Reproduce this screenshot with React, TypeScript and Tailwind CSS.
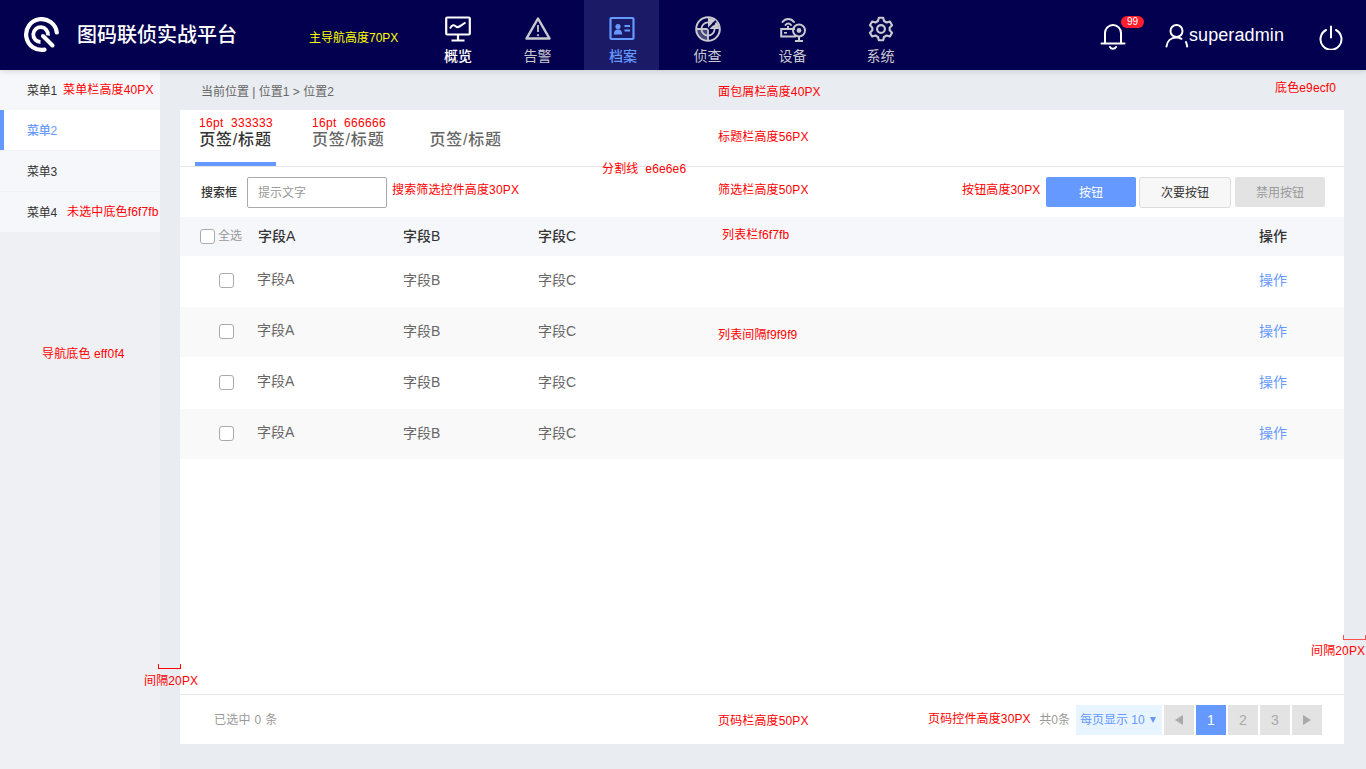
import type { ReactNode } from "react";

const FONT = "font-['Liberation_Sans','Noto_Sans_CJK_SC',sans-serif]";

function LogoMark() {
  return (
    <svg width="36" height="36" viewBox="0 0 36 36" fill="none" stroke="#fff" strokeLinecap="round">
      <path d="M20.5 32.6 A15.4 15.4 0 1 1 32.8 15.5" strokeWidth="4.2" />
      <path d="M16.5 25 A7.4 7.4 0 1 1 24 18.5" strokeWidth="3.8" strokeLinecap="butt" />
      <path d="M19 19 L28.5 28.5" strokeWidth="4" />
    </svg>
  );
}

function OverviewIcon() {
  return (
    <svg width="26" height="26" viewBox="0 0 26 26" fill="none" stroke="currentColor" strokeWidth="2.2">
      <rect x="1.2" y="1.5" width="23.6" height="17" rx="1" />
      <path d="M5 12.5 C7 8.5 9 8.5 11 10.5 C13 12.5 15 10 20.5 6.5" strokeWidth="2" />
      <path d="M13 18.5 V24 M6.5 24.5 H19.5" />
    </svg>
  );
}

function AlertIcon() {
  return (
    <svg width="26" height="26" viewBox="0 0 26 26" fill="none" stroke="currentColor" strokeWidth="2.5" strokeLinejoin="round">
      <path d="M13 2.5 L24.5 22.5 H1.5 Z" />
      <path d="M13 9 V16" strokeWidth="1.8" />
      <circle cx="13" cy="19.2" r="0.7" strokeWidth="1" fill="currentColor" />
    </svg>
  );
}

function ArchiveIcon() {
  return (
    <svg width="26" height="26" viewBox="0 0 26 26" fill="none" stroke="currentColor" strokeWidth="2.2">
      <rect x="1.5" y="2" width="23" height="21" rx="1" />
      <circle cx="9" cy="10.5" r="2.6" fill="currentColor" stroke="none" />
      <path d="M4.8 18.5 C5 14.5 6.8 13.5 9 13.5 C11.2 13.5 13 14.5 13.2 18.5 Z" fill="currentColor" stroke="none" />
      <path d="M15.5 10 H21 M15.5 14.5 H21" strokeWidth="1.8" />
    </svg>
  );
}

function RadarIcon() {
  return (
    <svg width="26" height="26" viewBox="0 0 26 26" fill="none" stroke="currentColor" strokeWidth="2">
      <circle cx="13" cy="13" r="11.8" />
      <path d="M13 2 A11 11 0 0 1 24 13 L13 13 Z" fill="currentColor" stroke="none" />
      <path d="M1.5 13 A11.5 11.5 0 0 0 13 24.5 V13 Z" fill="currentColor" fillOpacity="0.35" stroke="none" />
      <circle cx="13" cy="13" r="6.6" strokeWidth="1.8" />
      <path d="M1.5 13 H13 V25" strokeWidth="1.8" />
      <path d="M13 13 L21 5" strokeWidth="1.8" stroke="#03004f" />
      <circle cx="18.5" cy="8" r="1.4" fill="#03004f" stroke="none" />
    </svg>
  );
}

function DeviceIcon() {
  return (
    <svg width="26" height="26" viewBox="0 0 26 26" fill="none" stroke="currentColor" strokeWidth="2">
      <path d="M2.5 6 C5.5 2 11 2 14 6" strokeLinecap="round" />
      <path d="M5.5 9 C7 7 9.5 7 11 9" strokeLinecap="round" />
      <path d="M8 10 V13" />
      <path d="M15 13 H1.2 V20.5 H16" />
      <path d="M4 16.8 H7" strokeWidth="1.6" />
      <circle cx="19" cy="14.5" r="6" />
      <circle cx="19" cy="14.5" r="2.4" fill="currentColor" stroke="none" />
      <path d="M19 20.5 V25 M15 25 H23" />
    </svg>
  );
}

function GearIcon() {
  return (
    <svg width="26" height="26" viewBox="0 0 24 24" fill="none" stroke="currentColor" strokeWidth="2" strokeLinejoin="round">
      <path d="M10 1.6 H14 L14.8 4.6 L17.2 6 L20.2 5.1 L22.2 8.6 L20 10.8 V13.2 L22.2 15.4 L20.2 18.9 L17.2 18 L14.8 19.4 L14 22.4 H10 L9.2 19.4 L6.8 18 L3.8 18.9 L1.8 15.4 L4 13.2 V10.8 L1.8 8.6 L3.8 5.1 L6.8 6 L9.2 4.6 Z" />
      <circle cx="12" cy="12" r="3.6" />
    </svg>
  );
}

const navItems: { label: string; icon: ReactNode; className: string; labelClass?: string }[] = [
  { label: "概览", icon: <OverviewIcon />, className: "ml-[0px] text-white font-medium", labelClass: "pl-[1px]" },
  { label: "告警", icon: <AlertIcon />, className: "ml-[5px] text-[#c9c9cf]" },
  { label: "档案", icon: <ArchiveIcon />, className: "ml-[9px] text-[#6699ff] font-medium bg-[#1a1a66]", labelClass: "pl-[3px]" },
  { label: "侦查", icon: <RadarIcon />, className: "ml-[11px] text-[#c9c9cf]" },
  { label: "设备", icon: <DeviceIcon />, className: "ml-[10px] text-[#c9c9cf]" },
  { label: "系统", icon: <GearIcon />, className: "ml-[13px] text-[#c9c9cf]" },
];

const menuItems = [
  { label: "菜单1", className: "h-10 bg-[#f6f7fb] text-[#333333] border-l-4 border-[#f6f7fb]" },
  { label: "菜单2", className: "h-10 bg-white text-[#6699ff] font-medium border-l-4 border-[#6699ff]" },
  { label: "菜单3", className: "h-10 mt-px bg-[#f6f7fb] text-[#333333] border-l-4 border-[#f6f7fb]" },
  { label: "菜单4", className: "h-10 mt-px bg-[#f6f7fb] text-[#333333] border-l-4 border-[#f6f7fb]" },
];

const rows = [
  "h-[50px] bg-white",
  "h-[50px] mt-px bg-[#f9f9f9]",
  "h-[50px] mt-px bg-white",
  "h-[50px] mt-px bg-[#f9f9f9]",
];

// red spec notes sit on top of the design, so they are placed by coordinates
const notes = [
  { text: "菜单栏高度40PX", className: "left-[63px] top-[82px]" },
  { text: "未选中底色f6f7fb", className: "left-[67px] top-[204px] tracking-[0.3px]" },
  { text: "导航底色 eff0f4", className: "left-[42px] top-[346px]" },
  { text: "间隔20PX", className: "left-[144px] top-[673px]" },
  { text: "16pt  333333", className: "left-[199px] top-[115px] whitespace-pre tracking-[0.33px]" },
  { text: "16pt  666666", className: "left-[312px] top-[115px] whitespace-pre tracking-[0.33px]" },
  { text: "搜索筛选控件高度30PX", className: "left-[392px] top-[182px]" },
  { text: "分割线  e6e6e6", className: "left-[602px] top-[161px] whitespace-pre" },
  { text: "面包屑栏高度40PX", className: "left-[718px] top-[84px]" },
  { text: "标题栏高度56PX", className: "left-[718px] top-[129px]" },
  { text: "筛选栏高度50PX", className: "left-[718px] top-[182px]" },
  { text: "列表栏f6f7fb", className: "left-[722px] top-[227px]" },
  { text: "列表间隔f9f9f9", className: "left-[718px] top-[327px]" },
  { text: "页码栏高度50PX", className: "left-[718px] top-[713px]" },
  { text: "按钮高度30PX", className: "left-[962px] top-[182px]" },
  { text: "页码控件高度30PX", className: "left-[928px] top-[711px]" },
  { text: "底色e9ecf0", className: "left-[1275px] top-[80px]" },
  { text: "间隔20PX", className: "left-[1311px] top-[643px]" },
];

function Checkbox() {
  return <span className="block h-[15px] w-[15px] rounded-[3px] border border-[#aaaaaa] bg-white" />;
}

function PageButton({ children, active }: { children: ReactNode; active?: boolean }) {
  return (
    <button
      type="button"
      className={
        active
          ? "flex h-[30px] w-[30px] items-center justify-center bg-[#6699ff] text-sm text-white"
          : "flex h-[30px] w-[30px] items-center justify-center bg-[#e3e3e3] text-sm text-[#aaaaaa]"
      }
    >
      {children}
    </button>
  );
}

export default function App() {
  return (
    <div className={`${FONT} relative flex h-[769px] w-[1366px] flex-col overflow-hidden bg-[#e9ecf0]`}>
      <header className="relative z-10 flex h-[70px] shrink-0 bg-[#03004f] shadow-[0_1px_6px_rgba(0,0,0,0.15)]">
        <div className="flex w-[420px] shrink-0 items-center pl-6">
          <LogoMark />
          <span className="ml-[17px] text-xl font-medium text-white">图码联侦实战平台</span>
        </div>
        <nav className="flex">
          {navItems.map((item) => (
            <a key={item.label} className={`flex h-[70px] w-[75px] flex-col items-center pt-4 ${item.className}`}>
              {item.icon}
              <span className={`mt-1 text-sm leading-5 ${item.labelClass ?? ""}`}>{item.label}</span>
            </a>
          ))}
        </nav>
        <div className="ml-auto flex items-center text-white">
          <div className="relative mt-[1px]">
            <svg width="26" height="28" viewBox="0 0 26 28" fill="none" stroke="currentColor" strokeWidth="2">
              <path d="M1.5 21.5 H24.5 M5 21.5 V11 A8 8 0 0 1 21 11 V21.5" strokeLinecap="round" />
              <path d="M10 25 A3.4 3.4 0 0 0 16 25" strokeLinecap="round" />
            </svg>
            <span className="absolute left-[21px] top-[-6px] flex h-3 w-[23px] items-center justify-center rounded-full bg-[#ff1f2f] text-[10px] leading-none text-white">
              99
            </span>
          </div>
          <svg className="ml-[39px] mt-[2px]" width="24" height="26" viewBox="0 0 24 26" fill="none" stroke="currentColor" strokeWidth="2" strokeLinecap="round">
            <circle cx="11.5" cy="8" r="6" />
            <path d="M1.5 23.5 C2 18 6 14.5 11.5 14.5 C13.5 14.5 15 15 16.5 15.8" />
            <path d="M21 19 C21.6 20.5 22 22 22.2 23.5" />
          </svg>
          <span className="mr-[35px] text-lg leading-none tracking-[0.1px]">superadmin</span>
          <svg className="mr-[23px] mt-[4px]" width="24" height="25" viewBox="0 0 24 25" fill="none" stroke="currentColor" strokeWidth="2" strokeLinecap="round">
            <path d="M7 5 A10.5 10.5 0 1 0 17 5" />
            <path d="M12 1.5 V12.5" />
          </svg>
        </div>
      </header>

      <div className="flex min-h-0 flex-1">
        <aside className="w-40 shrink-0 bg-[#eff0f4]">
          {menuItems.map((item) => (
            <div key={item.label} className={`flex items-center pl-[23px] pt-[2px] text-xs tracking-[-0.3px] ${item.className}`}>
              {item.label}
            </div>
          ))}
        </aside>

        <main className="flex min-w-0 flex-1 flex-col pb-[25px] pl-5 pr-[22px]">
          <div className="flex h-10 shrink-0 items-center pl-[21px] pt-[3px] text-xs text-[#666666]">
            当前位置 | 位置1 &gt; 位置2
          </div>

          <section className="flex min-h-0 flex-1 flex-col bg-white">
            <div className="flex h-[57px] shrink-0 border-b border-[#e6e6e6] pl-[15px] tracking-[0.8px]">
              <div className="flex h-14 w-[81px] items-center justify-center border-b-[4px] border-[#6699ff] pt-[8px] text-base font-medium text-[#333333]">
                页签/标题
              </div>
              <div className="ml-[36px] flex h-14 items-center pt-[4px] text-base font-medium text-[#666666]">
                页签/标题
              </div>
              <div className="ml-[45px] flex h-14 items-center pt-[4px] text-base font-medium text-[#666666]">
                页签/标题
              </div>
            </div>

            <div className="flex h-[50px] shrink-0 items-center pl-[21px] pr-[19px]">
              <span className="pt-[2px] text-xs font-medium text-[#333333]">搜索框</span>
              <div className="ml-[10px] flex h-[31px] w-[140px] items-center rounded-[2px] border border-[#aaaaaa] pl-[10px] pt-[1px] text-xs text-[#999999]">
                提示文字
              </div>
              <div className="ml-auto flex items-center text-xs">
                <button type="button" className="h-[30px] w-[90px] rounded-[2px] bg-[#6699ff] pt-[2px] text-white">
                  按钮
                </button>
                <button type="button" className="ml-[3px] h-[31px] w-[92px] rounded-[3px] border border-[#dcdcdc] bg-[#f7f7f7] pt-[2px] text-[#333333]">
                  次要按钮
                </button>
                <button type="button" className="ml-1 h-[30px] w-[90px] rounded-[2px] bg-[#e3e3e3] pt-[2px] text-[#999999]">
                  禁用按钮
                </button>
              </div>
            </div>

            <div className="flex h-[39px] shrink-0 items-center bg-[#f6f7fb] pb-[2px] text-sm font-medium text-[#333333]">
              <span className="ml-[20px] mt-[1px]">
                <Checkbox />
              </span>
              <span className="ml-[3px] w-[40px] text-xs font-normal text-[#999999]">全选</span>
              <span className="w-[145px]">字段A</span>
              <span className="w-[135px]">字段B</span>
              <span>字段C</span>
              <span className="ml-auto mr-[57px]">操作</span>
            </div>

            {rows.map((row, index) => (
              <div key={index} className={`flex shrink-0 items-center text-sm text-[#666666] ${row}`}>
                <span className="ml-[39px] mb-[1px]">
                  <Checkbox />
                </span>
                <span className="ml-[23px] mb-[5px] w-[146px]">字段A</span>
                <span className="mb-[3px] w-[135px]">字段B</span>
                <span className="mb-[3px]">字段C</span>
                <span className="ml-auto mb-[3px] mr-[57px] text-[#6699ff]">操作</span>
              </div>
            ))}

            <div className="mt-auto flex h-[50px] shrink-0 items-center border-t border-[#e6e6e6] pl-[34px] pr-[22px] text-xs text-[#999999]">
              <span className="tracking-[0.3px]">已选中 0 条</span>
              <div className="ml-auto flex items-center gap-[2px]">
                <span className="mr-[4px]">共0条</span>
                <div className="flex h-[30px] w-[86px] items-center gap-[5px] bg-[#e8f4ff] pl-[4px] text-[#6699ff]">
                  每页显示 10
                  <span className="h-0 w-0 border-x-[3.5px] border-t-[6px] border-x-transparent border-t-[#6699ff]" />
                </div>
                <PageButton>
                  <span className="h-0 w-0 border-y-[5px] border-r-[8px] border-y-transparent border-r-[#aaaaaa]" />
                </PageButton>
                <PageButton active>1</PageButton>
                <PageButton>2</PageButton>
                <PageButton>3</PageButton>
                <PageButton>
                  <span className="h-0 w-0 border-y-[5px] border-l-[8px] border-y-transparent border-l-[#aaaaaa]" />
                </PageButton>
              </div>
            </div>
          </section>
        </main>
      </div>

      <span className="absolute left-[309px] top-[30px] z-20 text-xs text-[#ffff00]">主导航高度70PX</span>
      {notes.map((note) => (
        <span key={note.text + note.className} className={`absolute z-20 text-xs tracking-[0.14px] text-[#ff0000] ${note.className}`}>
          {note.text}
        </span>
      ))}
      <span className="absolute left-[158px] top-[664px] z-20 h-[5px] w-[23px] border-x border-b border-[#ff0000]" />
      <span className="absolute left-[1343px] top-[635px] z-20 h-[5px] w-[23px] border-x border-b border-[#ff5050]" />
    </div>
  );
}
